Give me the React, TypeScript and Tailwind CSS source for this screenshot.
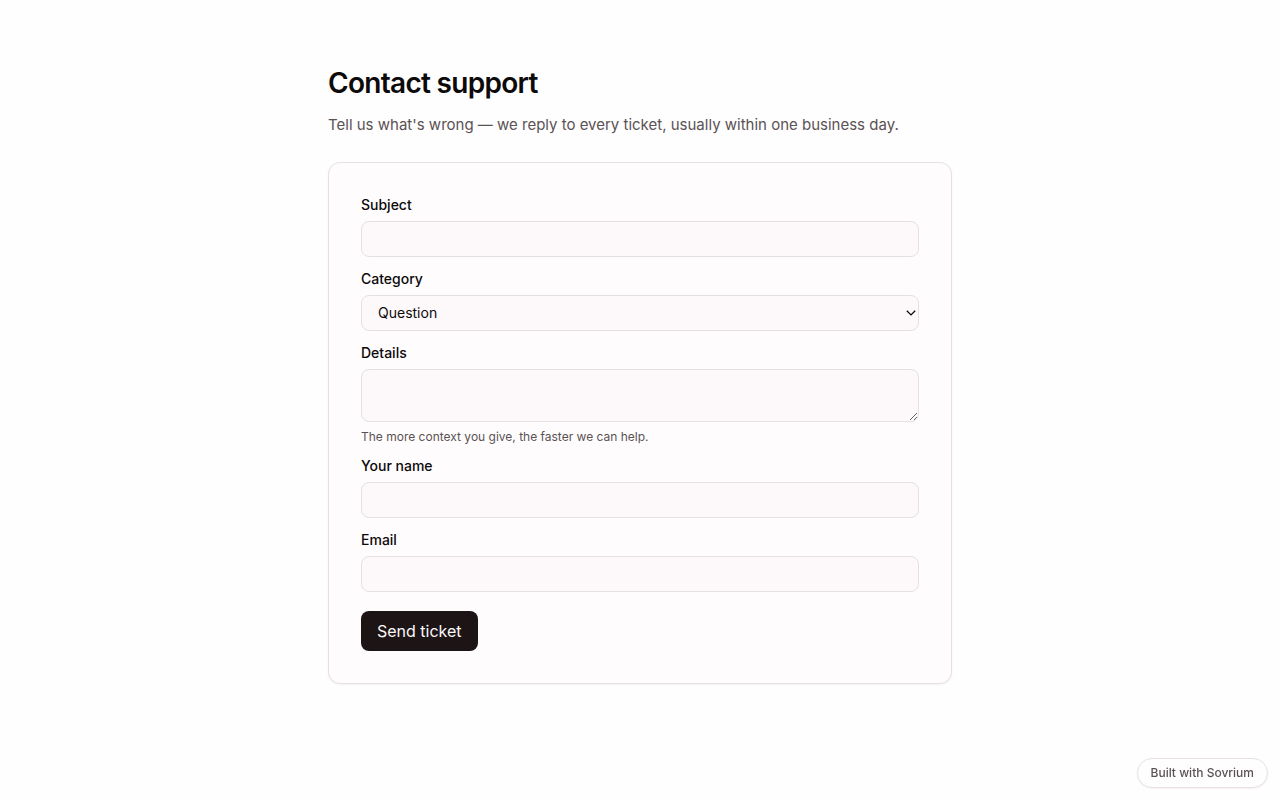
import React from "react";

const field =
  "block w-full rounded-lg border border-[#e6e1e1] bg-[#fdf9fb] text-sm text-[#0c0a0b]";

function Field({
  id,
  label,
  hint,
  children,
}: {
  id: string;
  label: string;
  hint?: string;
  children: React.ReactNode;
}) {
  return (
    <div>
      <label htmlFor={id} className="mb-1.5 block text-sm leading-5 font-medium">
        {label}
      </label>
      {children}
      {hint && <p className="mt-2 text-xs leading-[14px] text-[#5b5254]">{hint}</p>}
    </div>
  );
}

export default function App() {
  return (
    <div className="min-h-screen bg-[#fefefe] px-6 py-16 font-[Inter,sans-serif] text-[#0c0a0b]">
      <main className="mx-auto max-w-[624px]">
        <h1 className="text-[28px] leading-[38px] font-semibold tracking-tight">Contact support</h1>
        <p className="mt-3 text-[15px] leading-[22px] text-[#5b5254]">
          Tell us what's wrong — we reply to every ticket, usually within one business day.
        </p>
        <form
          className="mt-[26px] rounded-xl border border-[#e9e0e3] bg-[#fefcfd] p-8 shadow-xs"
          onSubmit={(e) => e.preventDefault()}
        >
          <div className="flex flex-col gap-3">
            <Field id="subject" label="Subject">
              <input id="subject" type="text" className={`${field} h-9 px-3`} />
            </Field>
            <Field id="category" label="Category">
              <div className="relative">
                <select id="category" className={`${field} h-9 appearance-none px-4`}>
                  <option>Question</option>
                </select>
                <svg
                  aria-hidden="true"
                  viewBox="0 0 10 6"
                  className="pointer-events-none absolute top-[15px] right-[3px] h-[6px] w-[10px]"
                  fill="none"
                  stroke="#0c0a0b"
                  strokeWidth="1.3"
                >
                  <path d="M0.8 0.7 5 4.9 9.2 0.7" />
                </svg>
              </div>
            </Field>
            <Field
              id="details"
              label="Details"
              hint="The more context you give, the faster we can help."
            >
              <textarea id="details" className={`${field} h-[53px] resize-y px-3 py-2`} />
            </Field>
            <Field id="name" label="Your name">
              <input id="name" type="text" className={`${field} h-9 px-3`} />
            </Field>
            <Field id="email" label="Email">
              <input id="email" type="email" className={`${field} h-9 px-3`} />
            </Field>
          </div>
          <button
            type="submit"
            className="mt-[19px] h-10 rounded-lg bg-[#1d1416] px-4 text-base text-[#fbf8f9]"
          >
            Send ticket
          </button>
        </form>
      </main>
      <a
        href="#"
        className="fixed right-3 bottom-3 rounded-full border border-[#e9e0e3] bg-[#fefefe] px-[13px] py-1.5 text-xs leading-4 font-medium text-[#5b5254] shadow-xs"
      >
        Built with Sovrium
      </a>
    </div>
  );
}
